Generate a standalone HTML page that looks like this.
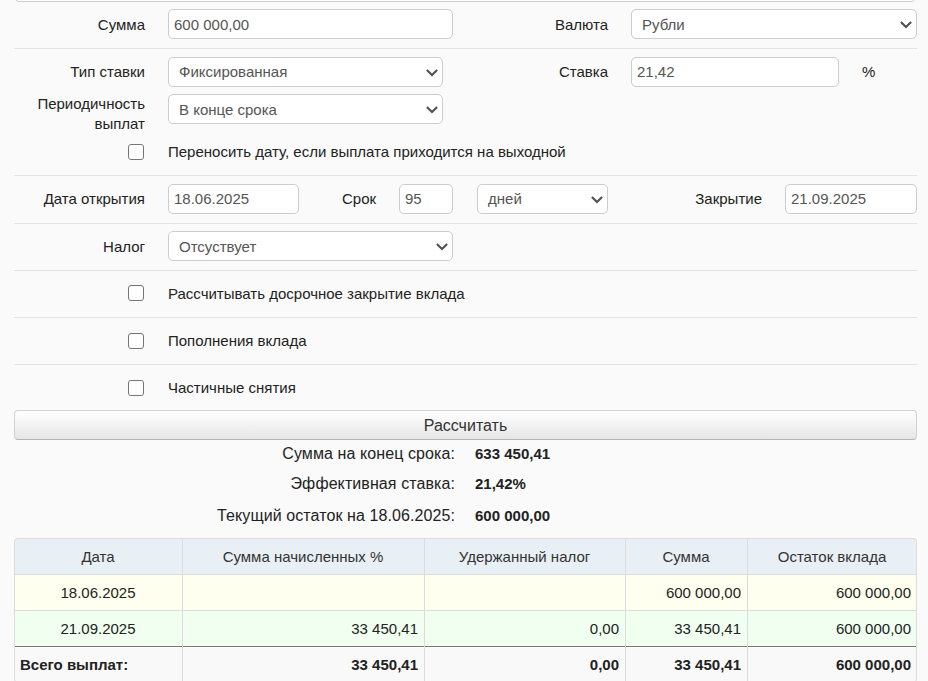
<!DOCTYPE html>
<html><head><meta charset="utf-8">
<style>
html,body{margin:0;padding:0;}
body{width:928px;height:681px;overflow:hidden;background:#fafafa;position:relative;font-family:"Liberation Sans",sans-serif;font-size:15px;color:#222;}
.a{position:absolute;}
.t{position:absolute;line-height:17px;white-space:nowrap;}
.r{text-align:right;}
.inp{position:absolute;box-sizing:border-box;height:30px;background:#fff;border:1px solid #cdcdcd;border-radius:5px;}
.inp span{position:absolute;left:5px;top:6px;line-height:17px;color:#555;white-space:nowrap;}
.sel span{left:10px;}
.chev{position:absolute;right:4.5px;top:10.5px;width:12px;height:8px;}
.sep{position:absolute;left:14px;width:903px;height:1px;background:#e3e3e3;}
.cb{position:absolute;left:128px;width:16px;height:16px;box-sizing:border-box;border:1.5px solid #767676;border-radius:3px;background:#fff;}
.tbl{position:absolute;left:14px;top:538px;width:903px;height:150px;box-sizing:border-box;border:1px solid #ddd;border-radius:4px;overflow:hidden;}
</style></head><body>
<!-- top box remnant -->
<div class="a" style="left:14px;top:-20px;width:902px;height:22px;box-sizing:border-box;border:1px solid #cdcdcd;border-radius:5px;background:#fff;"></div>

<!-- Row 1 -->
<div class="t r" style="right:783px;top:16px;">Сумма</div>
<div class="inp" style="left:168px;top:9px;width:285px;"><span>600 000,00</span></div>
<div class="t r" style="right:320px;top:16px;">Валюта</div>
<div class="inp sel" style="left:631px;top:9px;width:286px;"><span>Рубли</span><svg class="chev" viewBox="0 0 12 8"><path d="M0.9 0.9 L6 6.1 L11.1 0.9" fill="none" stroke="#525252" stroke-width="2.1"/></svg></div>
<div class="sep" style="top:48px;"></div>

<!-- Row 2 -->
<div class="t r" style="right:783px;top:63px;">Тип ставки</div>
<div class="inp sel" style="left:168px;top:57px;width:275px;"><span style="top:5px">Фиксированная</span><svg class="chev" viewBox="0 0 12 8"><path d="M0.9 0.9 L6 6.1 L11.1 0.9" fill="none" stroke="#525252" stroke-width="2.1"/></svg></div>
<div class="t r" style="right:320px;top:63px;">Ставка</div>
<div class="inp" style="left:631px;top:57px;width:208px;"><span style="top:5px">21,42</span></div>
<div class="t" style="left:862px;top:62.5px;">%</div>

<!-- Row 3 -->
<div class="t r" style="right:783px;top:94px;line-height:20px;">Периодичность<br>выплат</div>
<div class="inp sel" style="left:168px;top:94px;width:275px;"><span>В конце срока</span><svg class="chev" viewBox="0 0 12 8"><path d="M0.9 0.9 L6 6.1 L11.1 0.9" fill="none" stroke="#525252" stroke-width="2.1"/></svg></div>

<!-- Row 4 -->
<div class="cb" style="top:144px;"></div>
<div class="t" style="left:168px;top:143px;">Переносить дату, если выплата приходится на выходной</div>
<div class="sep" style="top:175px;"></div>

<!-- Row 5 -->
<div class="t r" style="right:783px;top:190px;">Дата открытия</div>
<div class="inp" style="left:168px;top:184px;width:131px;"><span style="top:5px">18.06.2025</span></div>
<div class="t" style="left:342px;top:190px;">Срок</div>
<div class="inp" style="left:399px;top:184px;width:54px;"><span style="top:5px">95</span></div>
<div class="inp sel" style="left:477px;top:184px;width:131px;"><span style="top:5px">дней</span><svg class="chev" viewBox="0 0 12 8"><path d="M0.9 0.9 L6 6.1 L11.1 0.9" fill="none" stroke="#525252" stroke-width="2.1"/></svg></div>
<div class="t r" style="right:166px;top:190px;">Закрытие</div>
<div class="inp" style="left:785px;top:184px;width:132px;"><span style="top:5px">21.09.2025</span></div>
<div class="sep" style="top:223px;"></div>

<!-- Row 6 -->
<div class="t r" style="right:783px;top:238px;">Налог</div>
<div class="inp sel" style="left:168px;top:231px;width:285px;"><span>Отсуствует</span><svg class="chev" viewBox="0 0 12 8"><path d="M0.9 0.9 L6 6.1 L11.1 0.9" fill="none" stroke="#525252" stroke-width="2.1"/></svg></div>
<div class="sep" style="top:270px;"></div>

<!-- Row 7-9 -->
<div class="cb" style="top:285px;"></div>
<div class="t" style="left:168px;top:285px;">Рассчитывать досрочное закрытие вклада</div>
<div class="sep" style="top:317px;"></div>
<div class="cb" style="top:333px;"></div>
<div class="t" style="left:168px;top:332px;">Пополнения вклада</div>
<div class="sep" style="top:364px;"></div>
<div class="cb" style="top:380px;"></div>
<div class="t" style="left:168px;top:379px;">Частичные снятия</div>

<!-- Button -->
<div class="a" style="left:14px;top:410px;width:903px;height:30px;box-sizing:border-box;border:1px solid #d2d2d2;border-bottom-color:#b4b4b4;border-radius:4px;background:linear-gradient(#ffffff,#e6e6e6);"></div>
<div class="t" style="left:0;width:931px;text-align:center;top:417px;color:#333;font-size:16px;">Рассчитать</div>

<!-- Results -->
<div class="t r" style="right:473px;top:445px;font-size:16px;letter-spacing:0.09px;">Сумма на конец срока:</div>
<div class="t" style="left:475px;top:445px;font-weight:bold;">633 450,41</div>
<div class="t r" style="right:473px;top:475px;font-size:16px;letter-spacing:0.09px;">Эффективная ставка:</div>
<div class="t" style="left:475px;top:475px;font-weight:bold;">21,42%</div>
<div class="t r" style="right:473px;top:507px;font-size:16px;letter-spacing:0.09px;">Текущий остаток на 18.06.2025:</div>
<div class="t" style="left:475px;top:507px;font-weight:bold;">600 000,00</div>

<!-- Table -->
<div class="a" style="left:14px;top:538px;width:903px;height:36px;background:#e9f0f5;border-radius:4px 4px 0 0;"></div>
<div class="a" style="left:14px;top:574px;width:903px;height:36px;background:#fffff0;"></div>
<div class="a" style="left:14px;top:610px;width:903px;height:36px;background:#f0fff0;"></div>
<div class="a" style="left:14px;top:646px;width:903px;height:37px;background:#f9f9f9;border-radius:0 0 4px 4px;"></div>
<div class="a" style="left:14px;top:574px;width:903px;height:1px;background:#dcdcdc;"></div>
<div class="a" style="left:14px;top:610px;width:903px;height:1px;background:#dcdcdc;"></div>
<div class="a" style="left:14px;top:646px;width:903px;height:1px;background:#777;"></div>
<div class="a" style="left:14px;top:647px;width:903px;height:1px;background:#fff;"></div>
<div class="a" style="left:182px;top:538px;width:1px;height:145px;background:#dcdcdc;"></div>
<div class="a" style="left:424px;top:538px;width:1px;height:145px;background:#dcdcdc;"></div>
<div class="a" style="left:625px;top:538px;width:1px;height:145px;background:#dcdcdc;"></div>
<div class="a" style="left:747px;top:538px;width:1px;height:145px;background:#dcdcdc;"></div>
<div class="a" style="left:14px;top:538px;width:903px;height:145px;box-sizing:border-box;border:1px solid #dcdcdc;border-radius:4px;"></div>
<div class="t" style="left:14px;width:168px;text-align:center;top:548px;color:#333;">Дата</div>
<div class="t" style="left:182px;width:242px;text-align:center;top:548px;color:#333;">Сумма начисленных %</div>
<div class="t" style="left:424px;width:201px;text-align:center;top:548px;color:#333;">Удержанный налог</div>
<div class="t" style="left:625px;width:122px;text-align:center;top:548px;color:#333;">Сумма</div>
<div class="t" style="left:747px;width:170px;text-align:center;top:548px;color:#333;">Остаток вклада</div>
<div class="t" style="left:14px;width:168px;text-align:center;top:584px;">18.06.2025</div>
<div class="t r" style="right:187px;top:584px;">600 000,00</div>
<div class="t r" style="right:17px;top:584px;">600 000,00</div>
<div class="t" style="left:14px;width:168px;text-align:center;top:620px;">21.09.2025</div>
<div class="t r" style="right:510px;top:620px;">33 450,41</div>
<div class="t r" style="right:309px;top:620px;">0,00</div>
<div class="t r" style="right:187px;top:620px;">33 450,41</div>
<div class="t r" style="right:17px;top:620px;">600 000,00</div>
<div class="t" style="left:20px;top:656px;font-weight:bold;">Всего выплат:</div>
<div class="t r" style="right:510px;top:656px;font-weight:bold;">33 450,41</div>
<div class="t r" style="right:309px;top:656px;font-weight:bold;">0,00</div>
<div class="t r" style="right:187px;top:656px;font-weight:bold;">33 450,41</div>
<div class="t r" style="right:17px;top:656px;font-weight:bold;">600 000,00</div>
</body></html>
